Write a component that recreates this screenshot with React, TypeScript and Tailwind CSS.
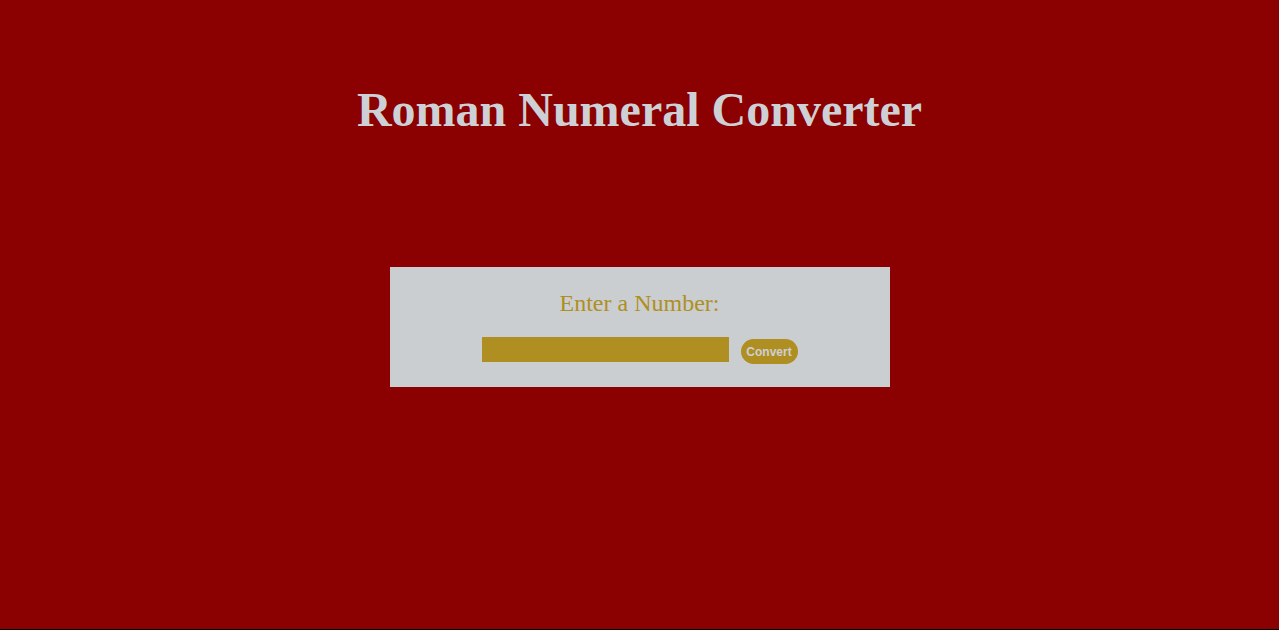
import React from 'react';

const App: React.FC = () => {
  return (
    <div className="w-full h-[630px] bg-black">
      <div className="h-[629px] bg-[#8b0000] flex flex-col items-center">
        <h1 className="mt-[86px] text-[48px] leading-[48px] font-bold text-[#cdd0d5] font-['Liberation_Serif',serif]">
          Roman Numeral Converter
        </h1>
        <div className="mt-[133px] w-[500px] h-[120px] bg-[#caced1] flex flex-col items-center">
          <p className="mt-[26px] text-[24px] leading-[20px] text-[#b08f22] font-['Liberation_Serif',serif]">
            Enter a Number:
          </p>
          <div className="mt-[24px] flex items-start gap-[12px]">
            <input
              type="text"
              className="w-[247px] h-[25px] bg-[#b08f22] outline-none border-0"
            />
            <button className="mt-[2px] h-[25px] w-[57px] rounded-full bg-[#b08f22] text-[12px] font-bold text-[#cdd0d5] font-['Liberation_Sans',sans-serif]">
              Convert
            </button>
          </div>
        </div>
      </div>
    </div>
  );
};

export default App;
